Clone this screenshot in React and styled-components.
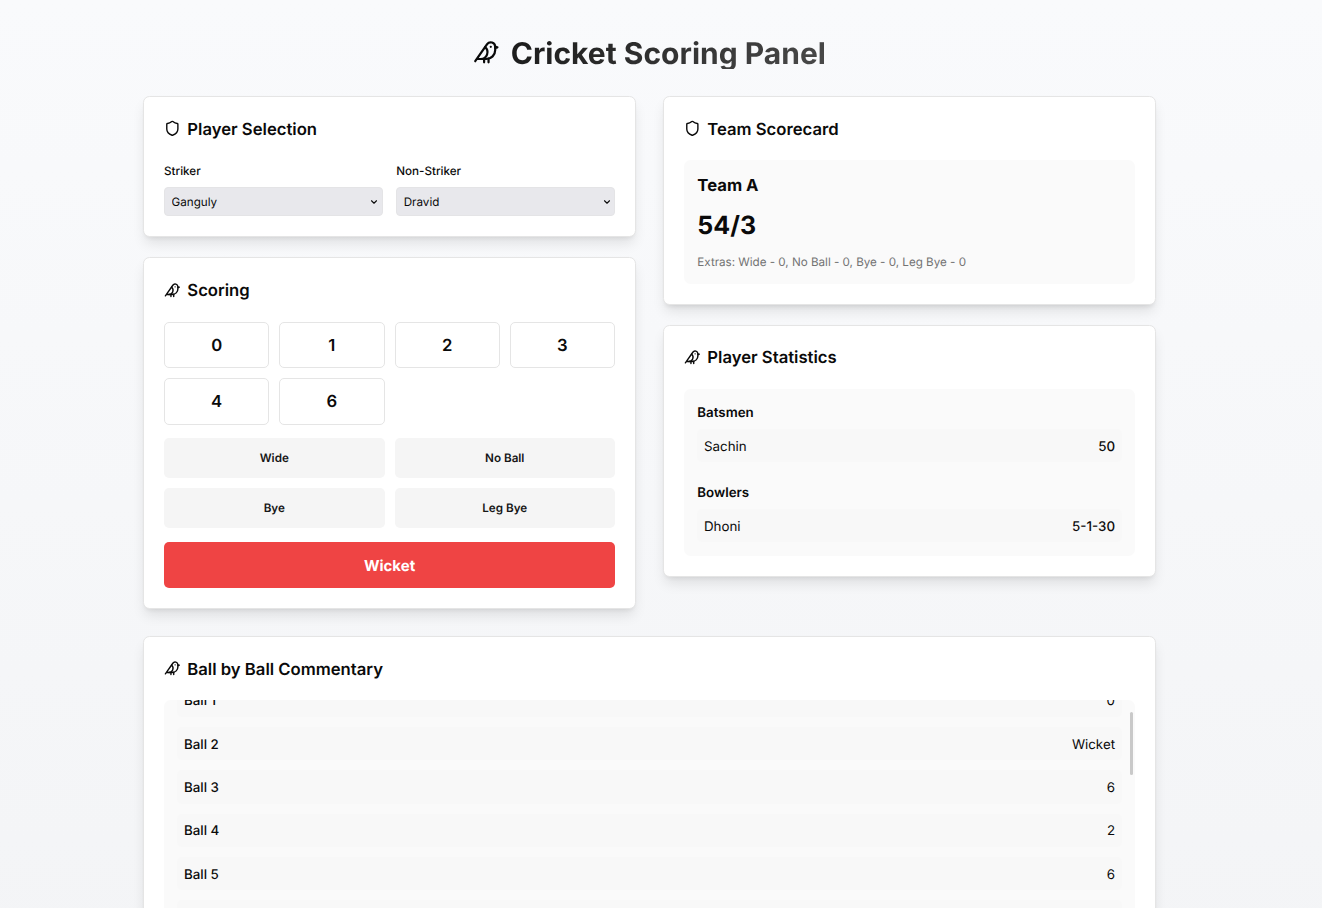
import React from "react";
import styled, { createGlobalStyle } from "styled-components";
import { Bird, Shield, ChevronDown } from "lucide-react";

const GlobalStyle = createGlobalStyle`
  *, *::before, *::after { box-sizing: border-box; }
  html, body { margin: 0; padding: 0; overflow: hidden; }
  body {
    font-family: Inter, "Liberation Sans", sans-serif;
    color: #0a0a0a;
    -webkit-font-smoothing: antialiased;
    text-rendering: geometricPrecision;
  }
  h1, h2, h3, h4, p, ul { margin: 0; padding: 0; }
  button, select { font-family: inherit; text-rendering: inherit; }
`;

const Page = styled.main`
  height: 908px;
  overflow: hidden;
  padding: 36px 166px 0 143px;
  background: linear-gradient(180deg, #f9fafc 0%, #f3f4f6 100%) 0 0 / 100% 1006px no-repeat;
`;

const PageHeader = styled.header`
  display: flex;
  align-items: center;
  justify-content: center;
  gap: 11px;
  height: 33px;
  margin-bottom: 27px;
`;

const PageTitle = styled.h1`
  height: 33px;
  padding-top: 2px;
  font-size: 30px;
  line-height: 32px;
  font-weight: 700;
  color: transparent;
  background: linear-gradient(135deg, #1a1a1a 0%, #4a4a4a 100%);
  background-clip: text;
  -webkit-background-clip: text;
`;

const Columns = styled.div`
  display: grid;
  grid-template-columns: 1fr 1fr;
  gap: 27px;
  align-items: start;
  height: 513px;
  margin-bottom: 27px;
`;

const Column = styled.div`
  display: flex;
  flex-direction: column;
  gap: 20px;
`;

const Card = styled.section`
  height: ${(p) => p.$height}px;
  padding: 20px;
  background: #fff;
  border: 1px solid #e5e5e5;
  border-radius: 6.5px;
  box-shadow: 0 8.3px 12.5px -2.5px rgba(0, 0, 0, 0.1),
    0 3.3px 5px -3.3px rgba(0, 0, 0, 0.1);
`;

const CardHeader = styled.div`
  display: flex;
  align-items: center;
  gap: 6.67px;
  height: 23.33px;
  margin-bottom: 20px;
`;

const CardTitle = styled.h2`
  padding-top: 3px;
  font-size: 16.67px;
  line-height: 23.33px;
  font-weight: 600;
`;

const Fields = styled.div`
  display: grid;
  grid-template-columns: 1fr 1fr;
  gap: 13.33px;
`;

const Field = styled.label`
  display: flex;
  flex-direction: column;
  gap: 5.67px;
  padding-top: 1px;
  font-size: 11.67px;
  line-height: 20px;
  font-weight: 500;
`;

const SelectWrap = styled.span`
  display: grid;
  align-items: center;
  justify-items: end;

  > * { grid-area: 1 / 1; }
  > svg { margin: 2px 3.5px 0 0; pointer-events: none; }
`;

const Select = styled.select`
  width: 100%;
  height: 29px;
  padding: 1px 6.5px 0;
  appearance: none;
  font-size: 11.67px;
  color: #0a0a0a;
  background: #e8e8ec;
  border: 1px solid #e4e4e6;
  border-radius: 4px;
`;

const ButtonGrid = styled.div`
  display: grid;
  grid-template-columns: repeat(${(p) => p.$cols}, 1fr);
  gap: 10px;
  margin-bottom: 13.33px;
`;

const RunButton = styled.button`
  height: 46.5px;
  padding: 2px 0 0;
  font-size: 16.67px;
  font-weight: 600;
  color: #0a0a0a;
  background: #fff;
  border: 1px solid #e5e5e5;
  border-radius: 5px;
`;

const ExtraButton = styled.button`
  height: 40px;
  padding: 0;
  font-size: 11.67px;
  font-weight: 600;
  color: #171717;
  background: #f5f5f5;
  border: 0;
  border-radius: 5px;
`;

const WicketButton = styled.button`
  display: block;
  width: 100%;
  height: 46px;
  margin-top: 14px;
  padding: 1px 0 0;
  font-size: 15px;
  font-weight: 700;
  color: #fff;
  background: #ef4444;
  border: 0;
  border-radius: 5px;
`;

const Panel = styled.div`
  padding: 13.33px;
  background: #fafafa;
  border-radius: 6.5px;
`;

const TeamName = styled.h3`
  padding-top: 1px;
  font-size: 16.67px;
  line-height: 23.33px;
  font-weight: 700;
`;

const Score = styled.p`
  padding-top: 1px;
  font-size: 25px;
  line-height: 55px;
  font-weight: 700;
`;

const Extras = styled.p`
  font-size: 11.67px;
  line-height: 16.67px;
  letter-spacing: -0.02px;
  color: #737373;
`;

const Group = styled.div`
  & + & { margin-top: 20px; }
`;

const GroupTitle = styled.h4`
  padding-top: 1px;
  margin-bottom: 5.67px;
  font-size: 13.33px;
  line-height: 20px;
  font-weight: 600;
`;

const Row = styled.div`
  display: flex;
  align-items: center;
  justify-content: space-between;
  height: 33.33px;
  padding: 2px 6.67px 0;
  font-size: 13.33px;
  background: #f8f8f8;
  border-radius: 5px;
`;

const Medium = styled.span`
  font-weight: 500;
`;

const Commentary = styled.div`
  position: relative;
  height: 333px;
  padding: 0 13.33px;
  overflow: hidden;
  background: #fafafa;
  border-radius: 6.5px;
`;

const BallList = styled.div`
  display: flex;
  flex-direction: column;
  gap: 10px;
  margin-top: -16.5px;
`;

const ScrollThumb = styled.div`
  position: absolute;
  top: 12px;
  right: 2px;
  width: 3px;
  height: 63px;
  background: #c9c9c9;
  border-radius: 2px;
`;

const RUNS = ["0", "1", "2", "3", "4", "6"];
const EXTRAS = ["Wide", "No Ball", "Bye", "Leg Bye"];
const BALLS = ["0", "Wicket", "6", "2", "6", "1"];

function Heading({ icon: Icon, children }) {
  return (
    <CardHeader>
      <Icon size={16.67} />
      <CardTitle>{children}</CardTitle>
    </CardHeader>
  );
}

function PlayerField({ label, value }) {
  return (
    <Field>
      {label}
      <SelectWrap>
        <Select defaultValue={value}>
          <option>{value}</option>
        </Select>
        <ChevronDown size={10} strokeWidth={2.6} />
      </SelectWrap>
    </Field>
  );
}

export default function App() {
  return (
    <>
      <GlobalStyle />
      <Page>
        <PageHeader>
          <Bird size={26.67} />
          <PageTitle>Cricket Scoring Panel</PageTitle>
        </PageHeader>
        <Columns>
          <Column>
            <Card $height={141.33}>
              <Heading icon={Shield}>Player Selection</Heading>
              <Fields>
                <PlayerField label="Striker" value="Ganguly" />
                <PlayerField label="Non-Striker" value="Dravid" />
              </Fields>
            </Card>
            <Card $height={351.67}>
              <Heading icon={Bird}>Scoring</Heading>
              <ButtonGrid $cols={4}>
                {RUNS.map((run) => (
                  <RunButton key={run}>{run}</RunButton>
                ))}
              </ButtonGrid>
              <ButtonGrid $cols={2}>
                {EXTRAS.map((extra) => (
                  <ExtraButton key={extra}>{extra}</ExtraButton>
                ))}
              </ButtonGrid>
              <WicketButton>Wicket</WicketButton>
            </Card>
          </Column>
          <Column>
            <Card $height={208.6}>
              <Heading icon={Shield}>Team Scorecard</Heading>
              <Panel>
                <TeamName>Team A</TeamName>
                <Score>54/3</Score>
                <Extras>Extras: Wide - 0, No Ball - 0, Bye - 0, Leg Bye - 0</Extras>
              </Panel>
            </Card>
            <Card $height={252}>
              <Heading icon={Bird}>Player Statistics</Heading>
              <Panel>
                <Group>
                  <GroupTitle>Batsmen</GroupTitle>
                  <Row>
                    <span>Sachin</span>
                    <Medium>50</Medium>
                  </Row>
                </Group>
                <Group>
                  <GroupTitle>Bowlers</GroupTitle>
                  <Row>
                    <span>Dhoni</span>
                    <Medium>5-1-30</Medium>
                  </Row>
                </Group>
              </Panel>
            </Card>
          </Column>
        </Columns>
        <Card $height={418}>
          <Heading icon={Bird}>Ball by Ball Commentary</Heading>
          <Commentary>
            <BallList>
              {BALLS.map((result, i) => (
                <Row key={i}>
                  <Medium>Ball {i + 1}</Medium>
                  <span>{result}</span>
                </Row>
              ))}
            </BallList>
            <ScrollThumb />
          </Commentary>
        </Card>
      </Page>
    </>
  );
}
